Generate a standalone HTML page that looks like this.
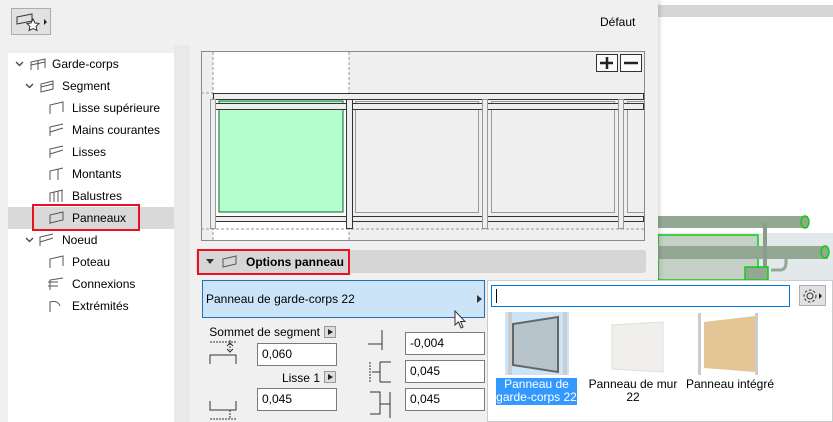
<!DOCTYPE html>
<html><head><meta charset="utf-8"><style>
*{box-sizing:border-box;margin:0;padding:0}
body{width:833px;height:422px;overflow:hidden;background:#fff;font-family:"Liberation Sans",sans-serif;font-size:12px;color:#000;position:relative}
.a{position:absolute}
.tree div{position:absolute;height:22px;line-height:22px;white-space:nowrap}
.inp{position:absolute;background:#fff;border:1px solid #7a7a7a;height:23px;line-height:21px;padding-left:4px;font-size:12px}
.sb{position:absolute;width:12px;height:12px;background:#ddd;border:1px solid #999}
.sb:after{content:"";position:absolute;left:3px;top:2px;border-left:5px solid #222;border-top:3px solid transparent;border-bottom:3px solid transparent}
</style></head><body>
<div class="a" style="left:658px;top:5px;width:175px;height:12px;background:#d6d6d6"></div>
<div class="a" style="left:658px;top:233px;width:175px;height:47px;background:#e3e8ea"></div>
<svg class="a" style="left:658px;top:200px" width="175" height="80">
<rect x="0" y="35" width="100" height="45" fill="#c4d0c8" stroke="#1c1" stroke-width="1.5"/>
<rect x="0" y="16" width="150" height="12" fill="#93a893"/>
<ellipse cx="147" cy="22" rx="4" ry="6" fill="#93a893" stroke="#1c1" stroke-width="1.5"/>
<rect x="0" y="46" width="170" height="13" fill="#93a893"/>
<ellipse cx="167" cy="52" rx="4" ry="6" fill="#93a893" stroke="#1c1" stroke-width="1.5"/>
<rect x="105" y="23" width="4" height="57" fill="#8a9d8a"/>
<rect x="87" y="67" width="23" height="13" fill="#93a893" stroke="#1c1" stroke-width="1.5"/>
<path d="M113 70 H122 Q128 70 128 62 V58" fill="none" stroke="#93a893" stroke-width="3"/>
</svg>
<div class="a" style="left:0;top:0;width:658px;height:422px;background:#f0f0f0;box-shadow:2px 0 4px rgba(0,0,0,.15)"></div>
<div class="a" style="left:11px;top:8px;width:40px;height:27px;background:#e1e1e1;border:1px solid #adadad"></div>
<svg class="a" style="left:14px;top:12px" width="36" height="20"><path d="M3 5 L18 2 L18 9 L3 12Z" fill="none" stroke="#333"/><path d="M19 7 l2 4 4 .5 -3 3 1 4 -4 -2 -4 2 1 -4 -3 -3 4 -.5z" fill="#fff" stroke="#333"/><path d="M30 7 l3 3 -3 3z" fill="#222"/></svg>
<div class="a" style="left:600px;top:15px;font-size:12px">Défaut</div>
<div class="a" style="left:174px;top:45px;width:16px;height:377px;background:#e9e9e9"></div>
<div class="a tree" style="left:8px;top:53px;width:166px;height:369px;background:#fff">
<div style="left:0;top:154px;width:166px;background:#d9d9d9"></div>
<div style="left:44px;top:0">Garde-corps</div>
<div style="left:54px;top:22px">Segment</div>
<div style="left:64px;top:44px">Lisse supérieure</div>
<div style="left:64px;top:66px">Mains courantes</div>
<div style="left:64px;top:88px">Lisses</div>
<div style="left:64px;top:110px">Montants</div>
<div style="left:64px;top:132px">Balustres</div>
<div style="left:64px;top:154px">Panneaux</div>
<div style="left:54px;top:176px">Noeud</div>
<div style="left:64px;top:198px">Poteau</div>
<div style="left:64px;top:220px">Connexions</div>
<div style="left:64px;top:242px">Extrémités</div>
</div>
<svg class="a" style="left:0;top:0" width="60" height="260" fill="none" stroke="#444" stroke-width="1.3">
<path d="M16 62 l3.5 3.5 3.5 -3.5"/><path d="M26 84 l3.5 3.5 3.5 -3.5"/><path d="M26 238 l3.5 3.5 3.5 -3.5"/>
</svg>
<svg class="a" style="left:28px;top:56px" width="40" height="260" fill="none" stroke="#555" stroke-width="1">
<path d="M3 14 V6 L17 3 V12 M10 14 V5 M3 9 L17 6"/>
<path d="M13 36 V28 L25 25 V33 Z M13 31 L25 28"/>
<path d="M22 58 V49 L35 46 V56"/><path d="M22 80 V71 L35 68 M22 76 L35 72"/>
<path d="M22 102 V93 L35 90 M22 98 L35 94"/><path d="M22 124 V115 L35 112 M30 113 V124"/>
<path d="M22 146 V137 L35 134 M26 136 V146 M30 135 V146 M34 134 V146"/>
<path d="M22 168 V159 L35 156 V164 L22 167"/>
<path d="M12 190 V181 L25 178 M12 186 L25 182"/><path d="M22 212 V203 L35 200 V210"/>
<path d="M22 234 V224 L35 222 M20 226 H30 M20 230 H30"/><path d="M22 256 V246 Q30 244 32 250"/>
</svg>
<div class="a" style="left:32px;top:204px;width:108px;height:27px;border:2px solid #e81123"></div>
<svg class="a" style="left:201px;top:51px" width="444" height="190">
<rect x="0.5" y="0.5" width="443" height="189" fill="#efefef" stroke="#888"/>
<rect x="12" y="1" width="136" height="188" fill="#fff"/>
<path d="M12 1 V189 M148 1 V189 M0 42 H12 M0 178 H443" stroke="#999" stroke-dasharray="3 2"/>
<rect x="18" y="50" width="124" height="111" fill="#b3ffcc" stroke="#063" />
<g fill="none" stroke="#999"><rect x="154.5" y="50.5" width="123" height="111"/><rect x="290.5" y="50.5" width="123" height="111"/><rect x="426.5" y="50.5" width="20" height="111"/></g>
<g fill="#eee" stroke="#333"><rect x="12.5" y="42.5" width="430" height="6"/><rect x="12.5" y="52.5" width="430" height="6"/><rect x="12.5" y="165.5" width="430" height="5"/><rect x="145.5" y="48.5" width="6" height="129"/></g>
<g fill="#eee" stroke="#999"><rect x="281.5" y="48.5" width="5" height="129"/><rect x="417.5" y="48.5" width="5" height="129"/><rect x="9.5" y="48.5" width="5" height="129"/></g>
<g fill="#fafafa" stroke="#333"><rect x="395.5" y="3.5" width="21" height="17"/><rect x="419.5" y="3.5" width="21" height="17"/></g>
<path d="M399 12 H412 M406 6 V18 M423 12 H437" stroke="#222" stroke-width="2.5"/>
</svg>
<div class="a" style="left:196px;top:250px;width:450px;height:23px;background:#d6d6d6;border-radius:3px"></div>
<div class="a" style="left:197px;top:249px;width:153px;height:26px;border:2px solid #e81123"></div>
<div class="a" style="left:206px;top:259px;border-top:5px solid #333;border-left:4px solid transparent;border-right:4px solid transparent"></div>
<svg class="a" style="left:220px;top:254px" width="20" height="16"><path d="M3 13 V5 L16 2 V10 Z" fill="none" stroke="#555"/></svg>
<div class="a" style="left:246px;top:255px;font-weight:bold;font-size:12px">Options panneau</div>
<div class="a" style="left:202px;top:280px;width:283px;height:38px;background:#cce4f7;border:1px solid #2b6cb0"></div>
<div class="a" style="left:206px;top:292px">Panneau de garde-corps 22</div>
<div class="a" style="left:477px;top:295px;border-left:5px solid #333;border-top:4px solid transparent;border-bottom:4px solid transparent"></div>
<svg class="a" style="left:454px;top:310px" width="16" height="20"><path d="M1 1 V15 L4.5 12 L7 18 L9 17 L6.5 11.5 L11 11.5 Z" fill="#fff" stroke="#333"/></svg>
<div class="a" style="left:150px;top:325px;width:170px;text-align:right;font-size:12px">Sommet de segment</div><div class="sb" style="left:324px;top:326px"></div>
<div class="a" style="left:220px;top:371px;width:100px;text-align:right">Lisse 1</div><div class="sb" style="left:324px;top:371px"></div>
<div class="inp" style="left:257px;top:343px;width:80px">0,060</div>
<div class="inp" style="left:257px;top:388px;width:80px">0,045</div>
<div class="inp" style="left:405px;top:332px;width:80px">-0,004</div>
<div class="inp" style="left:405px;top:360px;width:80px">0,045</div>
<div class="inp" style="left:405px;top:388px;width:80px">0,045</div>
<svg class="a" style="left:200px;top:330px" width="200" height="92" fill="none" stroke="#333">
<path d="M10 12 H36 M30 10 V20" stroke-dasharray="2 1"/><path d="M10 34 V25 H36 V34"/><path d="M27 16 l3 -3 3 3 M27 19 l3 3 3 -3"/>
<path d="M10 71 V80 H36 V71"/><path d="M10 89 H36 M30 80 V89" stroke-dasharray="2 1"/>
<path d="M182 0 V20 M168 14 H182"/><path d="M170 32 V52" stroke-dasharray="2 1"/><path d="M172 42 H180 M180 32 V52 M180 32 H191 M180 52 H191"/>
<path d="M170 62 H180 V84 H170 M190 62 V88" /><path d="M180 74 H190"/>
</svg>
<div class="a" style="left:487px;top:280px;width:346px;height:142px;background:#fff;border:1px solid #ccc"></div>
<div class="a" style="left:491px;top:285px;width:299px;height:22px;border:1px solid #0078d7;background:#fff"></div>
<div class="a" style="left:496px;top:289px;width:1px;height:14px;background:#000"></div>
<div class="a" style="left:799px;top:285px;width:27px;height:21px;background:#e1e1e1;border:1px solid #adadad"></div>
<svg class="a" style="left:801px;top:287px" width="24" height="18"><circle cx="9" cy="9" r="3" fill="none" stroke="#333"/><circle cx="9" cy="9" r="6" fill="none" stroke="#333" stroke-dasharray="2.5 2"/><path d="M18 6 l3 3 -3 3z" fill="#222"/></svg>
<div class="a" style="left:505px;top:312px;width:64px;height:63px;background:#cce4f7"></div>
<svg class="a" style="left:505px;top:312px" width="280" height="64">
<rect x="3" y="0" width="4" height="63" fill="#ccc"/><rect x="58" y="0" width="4" height="63" fill="#ccc"/>
<path d="M8 12 L53 5 L53 60 L8 53Z" fill="#b8c4cc" stroke="#666" stroke-width="2"/>
<path d="M107 13 L158 10 L158 60 L107 57Z" fill="#f0efec" stroke="#ddd"/>
<rect x="193" y="1" width="3" height="62" fill="#ccc"/><rect x="250" y="1" width="3" height="62" fill="#ccc"/>
<path d="M199 10 L250 4 L250 60 L199 56Z" fill="#e3c596"/>
</svg>
<div class="a" style="left:496px;top:378px;width:81px;height:27px;background:#3399ff;color:#fff;text-align:center;line-height:13px">Panneau de<br>garde-corps 22</div>
<div class="a" style="left:587px;top:378px;width:92px;text-align:center;line-height:13px">Panneau de mur<br>22</div>
<div class="a" style="left:684px;top:378px;width:92px;text-align:center;line-height:13px">Panneau intégré</div>
</body></html>
